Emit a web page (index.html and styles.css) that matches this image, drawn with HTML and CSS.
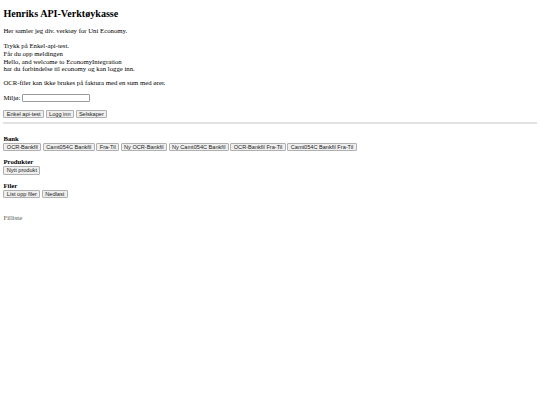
FILE: index.html
```html
<!DOCTYPE html>
<html lang="no">
<head>
<meta charset="utf-8">
<title>Henriks API-Verktøykasse</title>
<link rel="stylesheet" href="styles.css">
</head>
<body class="page">
<h1 class="title">Henriks API-Verktøykasse</h1>
<p class="text intro">Her samler jeg div. verktøy for Uni Economy.</p>
<p class="text">Trykk på Enkel-api-test.<br>Får du opp meldingen<br>Hello, and welcome to EconomyIntegration<br>har du forbindelse til economy og kan logge inn.</p>
<p class="text">OCR-filer kan ikke brukes på faktura med en sum med ører.</p>
<div class="field-row"><label class="text" for="miljo">Miljø:</label><input class="field" id="miljo" type="text"></div>
<div class="btn-row actions">
<button class="btn">Enkel api-test</button>
<button class="btn">Logg inn</button>
<button class="btn">Selskaper</button>
</div>
<hr class="rule">
<section class="group">
<b class="label">Bank</b>
<div class="btn-row">
<button class="btn">OCR-Bankfil</button>
<button class="btn">Camt054C Bankfil</button>
<button class="btn">Fra-Til</button>
<button class="btn">Ny OCR-Bankfil</button>
<button class="btn">Ny Camt054C Bankfil</button>
<button class="btn">OCR-Bankfil Fra-Til</button>
<button class="btn">Camt054C Bankfil Fra-Til</button>
</div>
</section>
<section class="group">
<b class="label">Produkter</b>
<div class="btn-row">
<button class="btn">Nytt produkt</button>
</div>
</section>
<section class="group">
<b class="label">Filer</b>
<div class="btn-row">
<button class="btn">List opp filer</button>
<button class="btn">Nedlast</button>
</div>
</section>
<p class="list">Filliste</p>
</body>
</html>
```

FILE: styles.css
```css
html {
  background: #ffffff;
}
.page {
  margin: 0;
  padding: 3.4px;
  font-family: "Liberation Serif", "Times New Roman", serif;
  font-size: 6.75px;
  line-height: 7.7px;
  color: #000000;
}
.title {
  font-size: 10.1px;
  line-height: 11.6px;
  font-weight: bold;
  margin: 4.3px 0 7.7px;
}
.text {
  margin: 6.2px 0;
}
.intro {
  margin-bottom: 7.6px;
}
.field-row {
  display: flex;
  align-items: center;
  gap: 1.7px;
  margin: 6.7px 0 0;
}
.field-row .text {
  margin: 0;
}
.field {
  width: 64px;
  height: 6px;
  box-sizing: content-box;
  padding: 0 1px;
  margin: 0;
  border: 1px solid #9a9a9a;
  border-radius: 1px;
  font-size: 5.6px;
  background: #ffffff;
}
.btn-row {
  display: flex;
  gap: 1.6px;
  margin-top: 0.7px;
}
.actions {
  margin-top: 8.4px;
}
.btn {
  font-family: "Liberation Sans", Arial, sans-serif;
  font-size: 5.6px;
  line-height: 6.4px;
  height: 8.4px;
  box-sizing: border-box;
  color: #222222;
  background: #efefef;
  border: 1px solid #b0b0b0;
  border-radius: 1px;
  padding: 0 2.4px;
  margin: 0;
}
.rule {
  border: 0;
  height: 1.7px;
  background: #e2e2e2;
  margin: 3.6px 0 0;
}
.group {
  margin-top: 10.9px;
}
.group + .group {
  margin-top: 6.7px;
}
.label {
  display: block;
  font-weight: bold;
}
.list {
  margin: 15.5px 0 0;
  color: #555555;
}
```
